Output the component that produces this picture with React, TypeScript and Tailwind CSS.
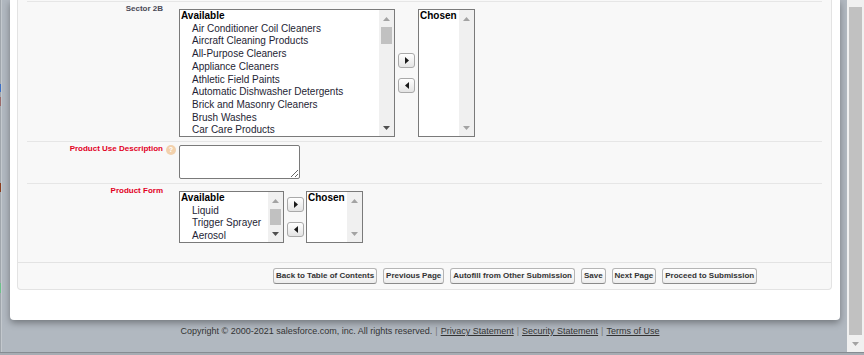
import React from "react";

const sectorItems = [
  "Air Conditioner Coil Cleaners",
  "Aircraft Cleaning Products",
  "All-Purpose Cleaners",
  "Appliance Cleaners",
  "Athletic Field Paints",
  "Automatic Dishwasher Detergents",
  "Brick and Masonry Cleaners",
  "Brush Washes",
  "Car Care Products",
];

const formItems = ["Liquid", "Trigger Sprayer", "Aerosol"];

function Tri({ dir, color }: { dir: "up" | "down" | "left" | "right"; color: string }) {
  if (dir === "up")
    return (
      <svg width="7" height="4" viewBox="0 0 7 4">
        <polygon points="0,4 3.5,0 7,4" fill={color} />
      </svg>
    );
  if (dir === "down")
    return (
      <svg width="7" height="4" viewBox="0 0 7 4">
        <polygon points="0,0 7,0 3.5,4" fill={color} />
      </svg>
    );
  if (dir === "right")
    return (
      <svg width="4" height="7" viewBox="0 0 4 7">
        <polygon points="0,0 4,3.5 0,7" fill={color} />
      </svg>
    );
  return (
    <svg width="4" height="7" viewBox="0 0 4 7">
      <polygon points="4,0 0,3.5 4,7" fill={color} />
    </svg>
  );
}

function ScrollCol({ active, thumb }: { active: boolean; thumb: string }) {
  return (
    <div className="w-[15px] shrink-0 bg-[#f0f0f0] flex flex-col">
      <div className="h-[17px] flex items-center justify-center">
        <Tri dir="up" color="#a3a3a3" />
      </div>
      <div className="flex-1 px-[2px]">
        {active && <div className={`${thumb} bg-[#c1c1c1]`} />}
      </div>
      <div className="h-[17px] flex items-center justify-center">
        <Tri dir="down" color={active ? "#505050" : "#a3a3a3"} />
      </div>
    </div>
  );
}

function ListBox({
  size,
  header,
  items,
  active,
  thumb,
}: {
  size: string;
  header: string;
  items: string[];
  active: boolean;
  thumb: string;
}) {
  return (
    <div className={`${size} shrink-0 border border-[#7a7a7a] bg-white flex`}>
      <div className="flex-1 overflow-hidden text-[10px] leading-[12.7px] text-[#1e1e34] pl-[1px]">
        <div className="font-bold text-black whitespace-nowrap">{header}</div>
        {items.map((it) => (
          <div key={it} className="pl-[11px] whitespace-nowrap">
            {it}
          </div>
        ))}
      </div>
      <ScrollCol active={active} thumb={thumb} />
    </div>
  );
}

function MoveButtons() {
  return (
    <div className="flex flex-col gap-[10px] ml-[3px] shrink-0">
      <div className="w-[17px] h-[15px] border border-[#a9a9a9] rounded-[3px] bg-gradient-to-b from-white to-[#e4e4e4] flex items-center justify-center">
        <Tri dir="right" color="#1a1a1a" />
      </div>
      <div className="w-[17px] h-[15px] border border-[#a9a9a9] rounded-[3px] bg-gradient-to-b from-white to-[#e4e4e4] flex items-center justify-center">
        <Tri dir="left" color="#1a1a1a" />
      </div>
    </div>
  );
}

function Label({ text, red }: { text: string; red?: boolean }) {
  return (
    <div
      className={`w-[138px] shrink-0 text-right pr-[2px] pt-[2px] text-[8px] leading-[10px] font-bold ${
        red ? "text-[#e2001f]" : "text-[#4a4a56]"
      }`}
    >
      {text}
    </div>
  );
}

function Btn({ children }: { children: React.ReactNode }) {
  return (
    <div className="h-[16px] px-[2px] border border-[#b5b5b5] border-b-[#8a8a8a] rounded-[3px] bg-gradient-to-b from-white to-[#ededed] text-[8px] leading-[14px] font-bold text-[#333] whitespace-nowrap">
      {children}
    </div>
  );
}

export default function App() {
  return (
    <div className="w-[864px] h-[355px] bg-[#b1b8c0] flex flex-col overflow-hidden font-['Liberation_Sans',Arial,sans-serif]">
      <div className="flex h-[352px]">
        {/* left edge of underlying frame */}
        <div className="relative w-[2px] shrink-0 bg-[#a0a6ac] border-r border-[#c3c8cd]">
          <div className="absolute left-0 top-[84px] w-[1px] h-[8px] bg-[#3b6fc4]" />
          <div className="absolute left-0 top-[97px] w-[1px] h-[9px] bg-[#9a6a6a]" />
          <div className="absolute left-0 top-[183px] w-[1px] h-[9px] bg-[#8a3c1c]" />
          <div className="absolute left-0 top-[283px] w-[1px] h-[10px] bg-[#6cc08a]" />
        </div>

        <div className="w-[845px] shrink-0 flex flex-col">
          {/* modal */}
          <div className="ml-[8px] w-[830px] bg-white rounded-b-[4px] shadow-[0_3px_7px_rgba(0,0,0,0.35)] pl-[7px] pr-[8px] pb-[30px]">
            <div className="bg-[#f8f8f8] border-x border-b border-[#e3e3e3] rounded-b-[4px] pt-[1px]">
              <div className="px-[9px]">
                {/* Sector 2B */}
                <div className="flex border-t border-[#e6e6e6]">
                  <Label text="Sector 2B" />
                  <div className="w-[14px] shrink-0" />
                  <div className="flex items-center pt-[7px] pb-[4px]">
                    <ListBox
                      size="w-[216px] h-[128px]"
                      header="Available"
                      items={sectorItems}
                      active
                      thumb="h-[17px]"
                    />
                    <MoveButtons />
                    <div className="ml-[3px]">
                      <ListBox
                        size="w-[57px] h-[128px]"
                        header="Chosen"
                        items={[]}
                        active={false}
                        thumb="h-0"
                      />
                    </div>
                  </div>
                </div>

                {/* Product Use Description */}
                <div className="flex border-t border-[#e6e6e6]">
                  <Label text="Product Use Description" red />
                  <div className="w-[14px] shrink-0 pl-[1px] pt-[3px]">
                    <div className="w-[10px] h-[10px] rounded-full bg-[#f2d1ad] text-white text-[7px] leading-[10px] font-bold text-center">
                      ?
                    </div>
                  </div>
                  <div className="pt-[3px] pb-[4px]">
                    <textarea className="block w-[121px] h-[34px] border border-[#7a7a7a] rounded-[2px] bg-white resize outline-none" />
                  </div>
                </div>

                {/* Product Form */}
                <div className="flex border-t border-[#e6e6e6]">
                  <Label text="Product Form" red />
                  <div className="w-[14px] shrink-0" />
                  <div className="flex items-center pt-[7px] pb-[19px]">
                    <ListBox
                      size="w-[105px] h-[52px]"
                      header="Available"
                      items={formItems}
                      active
                      thumb="h-full"
                    />
                    <MoveButtons />
                    <div className="ml-[2px]">
                      <ListBox
                        size="w-[57px] h-[52px]"
                        header="Chosen"
                        items={[]}
                        active={false}
                        thumb="h-0"
                      />
                    </div>
                  </div>
                </div>
              </div>

              {/* button bar */}
              <div className="border-t border-[#e3e3e3] pt-[5px] pb-[5px] pl-[255px] flex gap-[6px]">
                <Btn>Back to Table of Contents</Btn>
                <Btn>Previous Page</Btn>
                <Btn>Autofill from Other Submission</Btn>
                <Btn>Save</Btn>
                <Btn>Next Page</Btn>
                <Btn>Proceed to Submission</Btn>
              </div>
            </div>
          </div>

          {/* footer */}
          <div className="mt-[6px] pr-[9px] flex justify-center text-[9px] leading-[11px] text-[#333] whitespace-nowrap">
            <span>Copyright © 2000-2021 salesforce.com, inc. All rights reserved.</span>
            <span className="mx-[3px] text-[#777]">|</span>
            <span className="underline">Privacy Statement</span>
            <span className="mx-[3px] text-[#777]">|</span>
            <span className="underline">Security Statement</span>
            <span className="mx-[3px] text-[#777]">|</span>
            <span className="underline">Terms of Use</span>
          </div>
        </div>

        {/* outer scrollbar */}
        <div className="w-[17px] shrink-0 bg-[#f0f0f0] flex flex-col">
          <div className="mt-[7px] mx-[2px] h-[328px] bg-[#c1c1c1]" />
          <div className="flex-1 flex items-center justify-center">
            <Tri dir="down" color="#a3a3a3" />
          </div>
        </div>
      </div>
      <div className="h-[3px] bg-[#a6acb3] border-t border-[#868c92]" />
    </div>
  );
}
